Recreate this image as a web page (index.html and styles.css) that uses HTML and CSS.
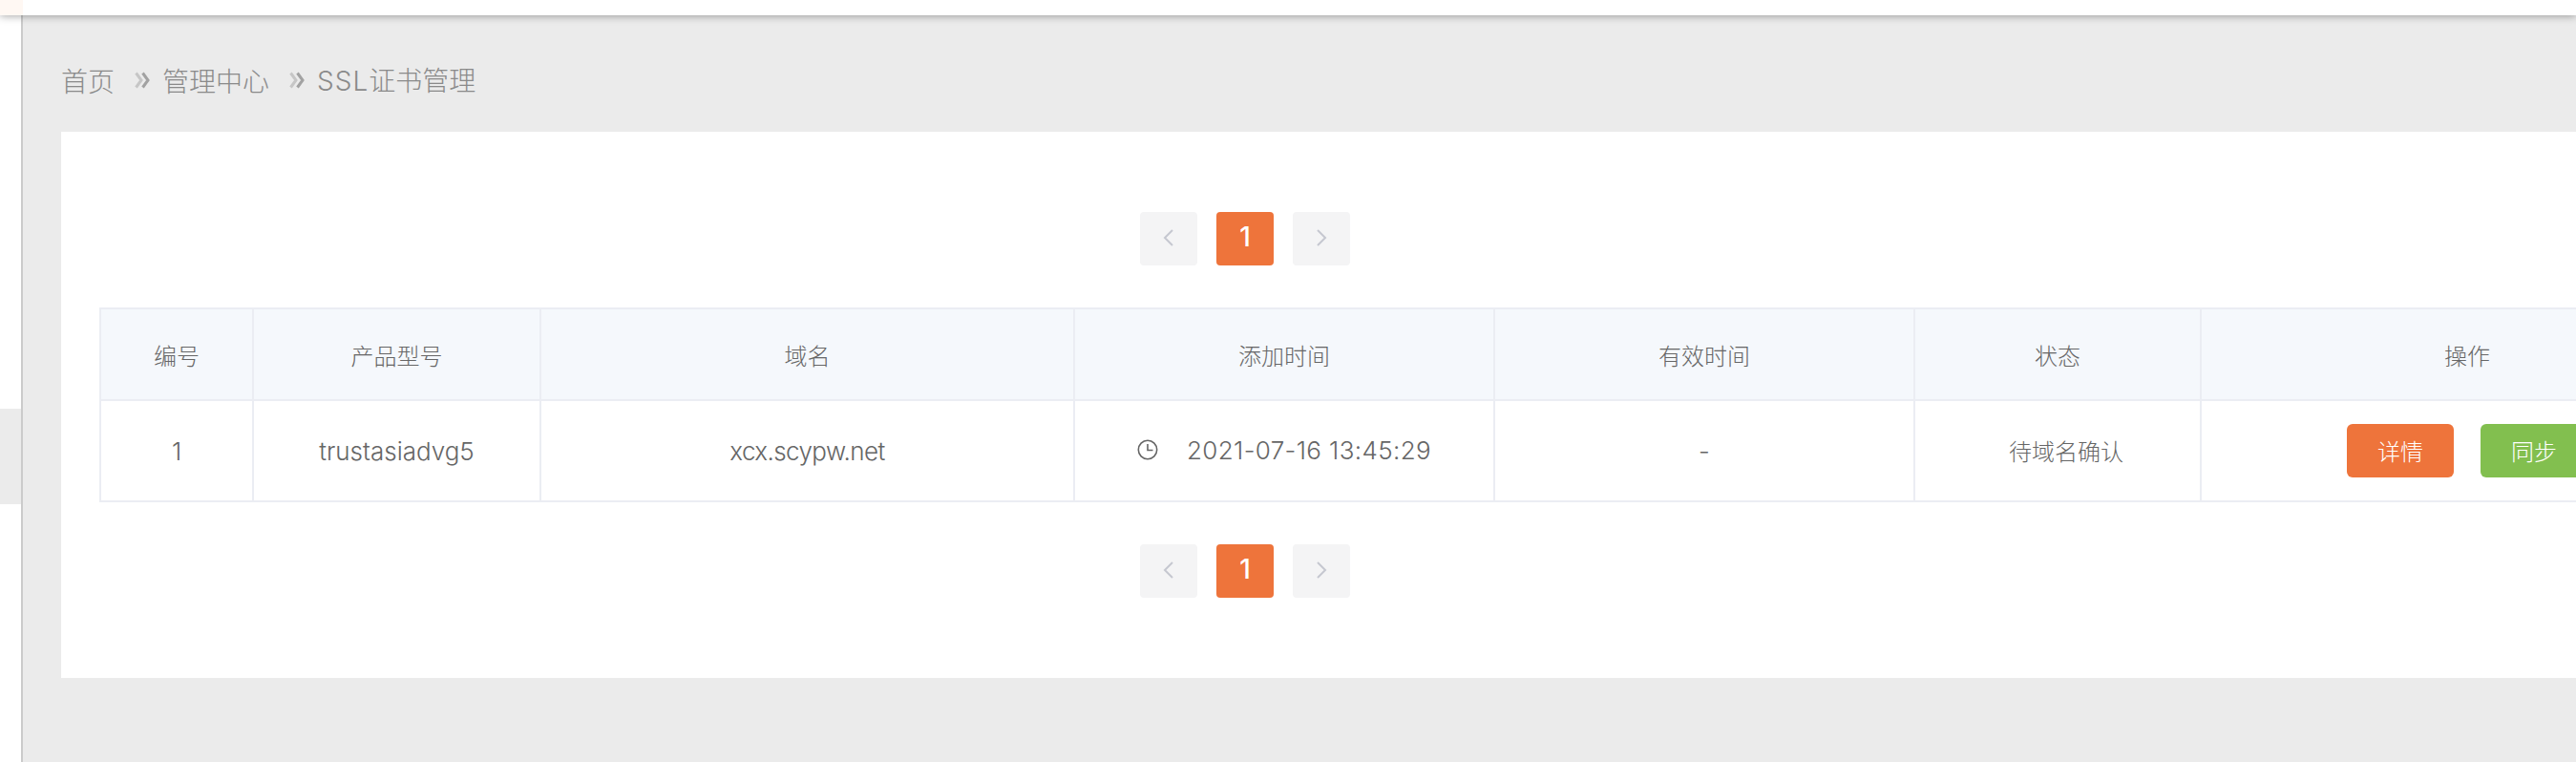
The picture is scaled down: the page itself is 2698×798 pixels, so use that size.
FILE: index.html
```html
<!DOCTYPE html>
<html lang="zh-CN">
<head>
<meta charset="utf-8">
<title>SSL证书管理</title>
<link rel="stylesheet" href="styles.css">
</head>
<body>
<div class="app">
  <aside class="sidebar"><div class="side-active"></div></aside>
  <div class="main">
    <header class="topbar"><div class="top-corner"></div></header>
    <nav class="crumbs">
      <span>首页</span>
      <svg class="sep" viewBox="0 0 18 18"><path class="sep-a" d="M2.5 1.5L8 9 2.5 16.5"/><path class="sep-b" d="M9.5 1.5L15 9 9.5 16.5"/></svg>
      <span>管理中心</span>
      <svg class="sep" viewBox="0 0 18 18"><path class="sep-a" d="M2.5 1.5L8 9 2.5 16.5"/><path class="sep-b" d="M9.5 1.5L15 9 9.5 16.5"/></svg>
      <span><span class="ssl">SSL</span>证书管理</span>
    </nav>
    <section class="card">
      <div class="pager pager-top">
        <div class="pg pg-off"><svg viewBox="0 0 12 20"><path d="M10 2L2 10l8 8"/></svg></div>
        <div class="pg pg-on">1</div>
        <div class="pg pg-off"><svg viewBox="0 0 12 20"><path d="M2 2l8 8-8 8"/></svg></div>
      </div>
      <table class="tbl">
        <colgroup>
          <col class="c1"><col class="c2"><col class="c3"><col class="c4"><col class="c5"><col class="c6"><col class="c7">
        </colgroup>
        <thead>
          <tr><th>编号</th><th>产品型号</th><th>域名</th><th>添加时间</th><th>有效时间</th><th>状态</th><th>操作</th></tr>
        </thead>
        <tbody>
          <tr>
            <td class="latin">1</td>
            <td class="latin">trustasiadvg5</td>
            <td class="latin domain">xcx.scypw.net</td>
            <td class="latin"><span class="time"><svg class="clock" viewBox="0 0 22 22"><circle cx="11" cy="11" r="9.7"/><path d="M11 5v6.5h5.5"/></svg>2021-07-16 13:45:29</span></td>
            <td class="latin">-</td>
            <td class="status">待域名确认</td>
            <td><div class="ops"><a class="btn btn-o">详情</a><a class="btn btn-g">同步</a></div></td>
          </tr>
        </tbody>
      </table>
      <div class="pager pager-bottom">
        <div class="pg pg-off"><svg viewBox="0 0 12 20"><path d="M10 2L2 10l8 8"/></svg></div>
        <div class="pg pg-on">1</div>
        <div class="pg pg-off"><svg viewBox="0 0 12 20"><path d="M2 2l8 8-8 8"/></svg></div>
      </div>
    </section>
  </div>
</div>
</body>
</html>
```

FILE: styles.css
```css
* { box-sizing: border-box; }
html, body { margin: 0; padding: 0; height: 100%; overflow: hidden; }
body {
  background: #ebebeb;
  font-family: "Inter", "Noto Sans CJK SC", sans-serif;
  font-weight: 300;
  color: #666;
}
.app { display: flex; width: 2698px; height: 798px; overflow: hidden; }
.sidebar {
  flex: 0 0 24px;
  background: #fff;
  border-right: 2px solid #cbcbcb;
  padding-top: 428px;
}
.side-active { height: 100px; background: #ebebeb; }
.main { flex: 1 1 auto; min-width: 0; display: flex; flex-direction: column; }
.topbar {
  height: 16px;
  background: #fff;
  box-shadow: 0 1px 8px rgba(0,0,0,.35);
  flex: none;
  margin-left: -24px;
}
.top-corner { width: 24px; height: 16px; background: #fff8f3; }
.crumbs {
  display: flex;
  align-items: center;
  height: 40px;
  margin: 48px 0 0 40px;
  font-size: 28px;
  line-height: 40px;
  color: #8a8a8a;
  font-family: "Noto Sans CJK SC", sans-serif;
  font-weight: 300;
}
.ssl { font-family: "Inter", sans-serif; letter-spacing: 1px; }
.sep { width: 18px; height: 18px; margin: 0 12px 0 20px; fill: none; stroke-width: 3; flex: none; filter: blur(0.5px); }
.sep-a { stroke: #c6c6c6; }
.sep-b { stroke: #a2a2a2; }
.card {
  margin: 34px 0 0 40px;
  width: 2900px;
  height: 572px;
  background: #fff;
  padding: 84px 0 0 40px;
  flex: none;
}
.pager { display: flex; gap: 20px; width: 2400px; justify-content: center; }
.pager-bottom { margin-top: 44px; }
.pg {
  width: 60px;
  height: 56px;
  border-radius: 4px;
  display: flex;
  align-items: center;
  justify-content: center;
}
.pg svg { width: 12px; height: 20px; fill: none; stroke: #c5c7d0; stroke-width: 2; margin-top: -2px; }
.pg-off { background: #f4f4f5; }
.pg-on { background: #ee743b; color: #fff; font-size: 28px; font-weight: 500; padding-bottom: 4px; }
.tbl {
  width: 2758px;
  margin-top: 44px;
  border-collapse: collapse;
  table-layout: fixed;
  font-size: 24px;
  text-align: center;
}
.c1 { width: 160px; } .c2 { width: 301px; } .c3 { width: 559px; } .c4 { width: 440px; }
.c5 { width: 440px; } .c6 { width: 300px; } .c7 { width: 558px; }
.tbl th, .tbl td { border: 2px solid #ebedf3; padding: 0; }
.tbl th { height: 96px; background: #f5f8fc; font-weight: 300; font-family: "Noto Sans CJK SC", sans-serif; }
.tbl td { height: 106px; }
.tbl td.latin { font-size: 26px; font-weight: 300; }
.tbl td.domain { letter-spacing: -0.6px; }
.tbl td.status { padding: 0 0 2px 18px; font-family: "Noto Sans CJK SC", sans-serif; }
.time { display: inline-flex; align-items: center; letter-spacing: 0.37px; }
.clock { width: 22px; height: 22px; margin-right: 30px; fill: none; stroke: #666; stroke-width: 1.6; }
.ops { display: flex; justify-content: center; gap: 28px; }
.btn {
  width: 112px;
  height: 56px;
  border-radius: 6px;
  color: #fff;
  line-height: 56px;
  font-size: 24px;
  font-family: "Noto Sans CJK SC", sans-serif;
}
.btn-o { background: #ee743b; }
.btn-g { background: #82bf4f; }
```
